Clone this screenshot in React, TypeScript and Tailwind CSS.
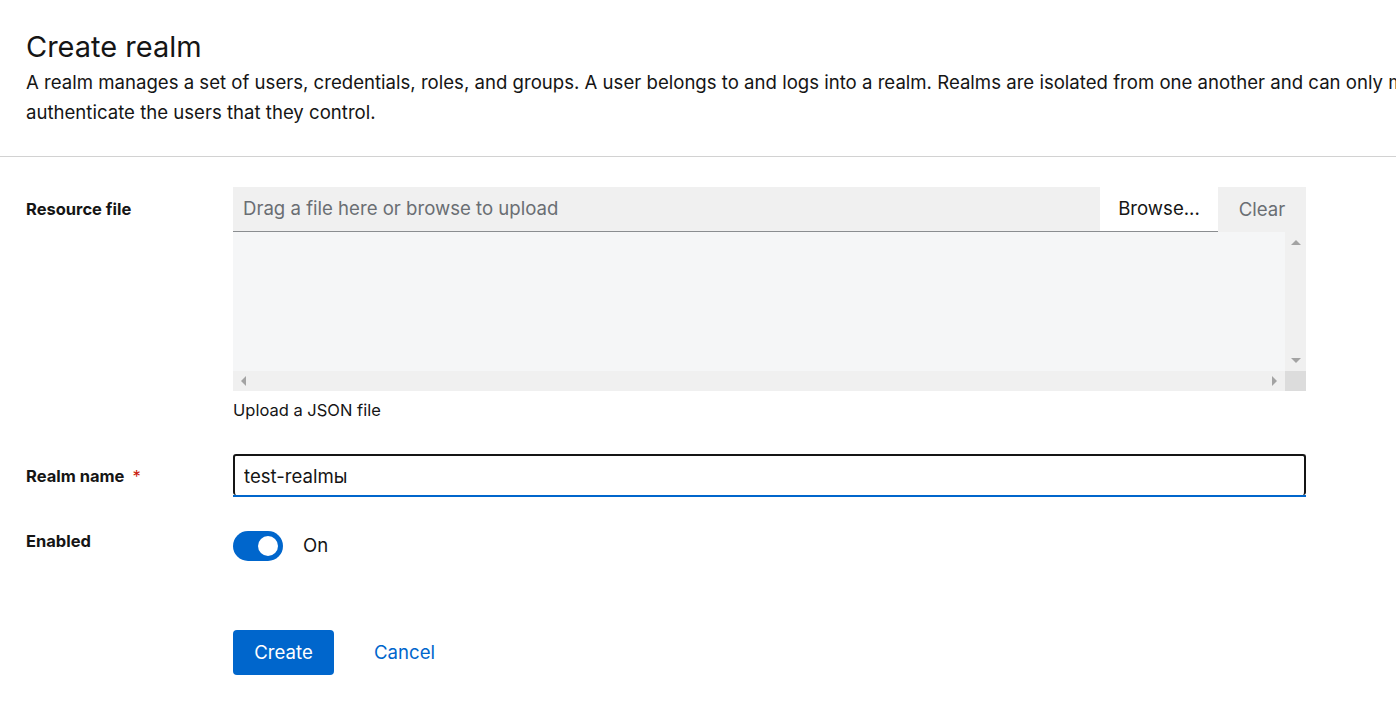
import { useState } from 'react'

const font = { fontFamily: 'Inter, "Open Sans", sans-serif' }

const FormLabel = ({ text, required }: { text: string; required?: boolean }) => (
    <div className="text-[16.5px] font-bold text-[#151515] leading-6 flex items-center">
        {text}
        {required && <span className="text-[#c9190b] ml-2 font-normal">*</span>}
    </div>
)

export default function App() {
    const [enabled, setEnabled] = useState(true)
    const [name, setName] = useState('test-realmы')

    return (
        <div className="w-[1396px] h-[707px] bg-white overflow-hidden text-[#151515]" style={font}>
            <div className="pl-[26px] pt-[29px] pb-[29px] border-b border-[#d2d2d2]">
                <h1 className="text-[29px] leading-[36px] font-normal">Create realm</h1>
                <p className="text-[18.6px] leading-[30px] mt-[2px] whitespace-nowrap">
                    A realm manages a set of users, credentials, roles, and groups. A user belongs to and logs into a realm. Realms are isolated from one another and can only manage and
                    <br />
                    authenticate the users that they control.
                </p>
            </div>

            <div className="pl-[26px] pt-[30px] grid grid-cols-[207px_1073px]">
                <div className="pt-[10px]">
                    <FormLabel text="Resource file" />
                </div>
                <div>
                    <div className="flex h-[45px] bg-[#f0f0f0]">
                        <div className="flex-1 flex items-center px-[10px] text-[18.6px] text-[#6a6e73] border-b border-[#8a8d90]">
                            Drag a file here or browse to upload
                        </div>
                        <button className="w-[118px] bg-white text-[18.6px] text-[#151515] border-b border-[#8a8d90]">Browse...</button>
                        <button className="w-[88px] text-[18.6px] text-[#6a6e73]">Clear</button>
                    </div>
                    <div className="flex h-[139px]">
                        <div className="flex-1 bg-[#f5f6f7]" />
                        <div className="w-[21px] bg-[#f0f0f0] flex flex-col items-center justify-between py-[8px]">
                            <div className="w-0 h-0 border-x-[5px] border-x-transparent border-b-[5px] border-b-[#a3a3a3]" />
                            <div className="w-0 h-0 border-x-[5px] border-x-transparent border-t-[5px] border-t-[#a3a3a3]" />
                        </div>
                    </div>
                    <div className="flex h-[20px]">
                        <div className="flex-1 bg-[#f0f0f0] flex items-center justify-between px-[8px]">
                            <div className="w-0 h-0 border-y-[5px] border-y-transparent border-r-[5px] border-r-[#a3a3a3]" />
                            <div className="w-0 h-0 border-y-[5px] border-y-transparent border-l-[5px] border-l-[#a3a3a3]" />
                        </div>
                        <div className="w-[21px] bg-[#dcdcdc]" />
                    </div>
                    <div className="text-[16.5px] leading-6 mt-[7px]">Upload a JSON file</div>
                </div>

                <div className="pt-[32px]">
                    <div className="h-[43px] flex items-center">
                        <FormLabel text="Realm name" required />
                    </div>
                </div>
                <div className="pt-[32px]">
                    <div className="relative h-[41px] border-2 border-[#151515] rounded-[3px] border-b-0">
                        <input
                            autoFocus
                            value={name}
                            onChange={e => setName(e.target.value)}
                            className="w-full h-full px-[9px] text-[18.6px] outline-none bg-transparent text-[#151515] caret-[#151515]"
                            style={font}
                        />
                        <div className="absolute -left-[2px] -right-[2px] -bottom-[2px] h-[2px] bg-[#0066cc]" />
                    </div>
                </div>

                <div className="pt-[32px]">
                    <FormLabel text="Enabled" />
                </div>
                <div className="pt-[34px] flex items-center gap-[20px]">
                    <button
                        onClick={() => setEnabled(!enabled)}
                        className={`w-[50px] h-[30px] rounded-full flex items-center px-[5px] ${enabled ? 'bg-[#0066cc] justify-end' : 'bg-[#8a8d90] justify-start'}`}
                    >
                        <span className="w-[20px] h-[20px] rounded-full bg-white" />
                    </button>
                    <span className="text-[18.6px]">{enabled ? 'On' : 'Off'}</span>
                </div>

                <div />
                <div className="pt-[69px] flex items-center gap-[40px]">
                    <button className="h-[45px] w-[101px] bg-[#0066cc] text-white text-[18.6px] rounded-[4px]">Create</button>
                    <button className="text-[18.6px] text-[#0066cc]">Cancel</button>
                </div>
            </div>
        </div>
    )
}
